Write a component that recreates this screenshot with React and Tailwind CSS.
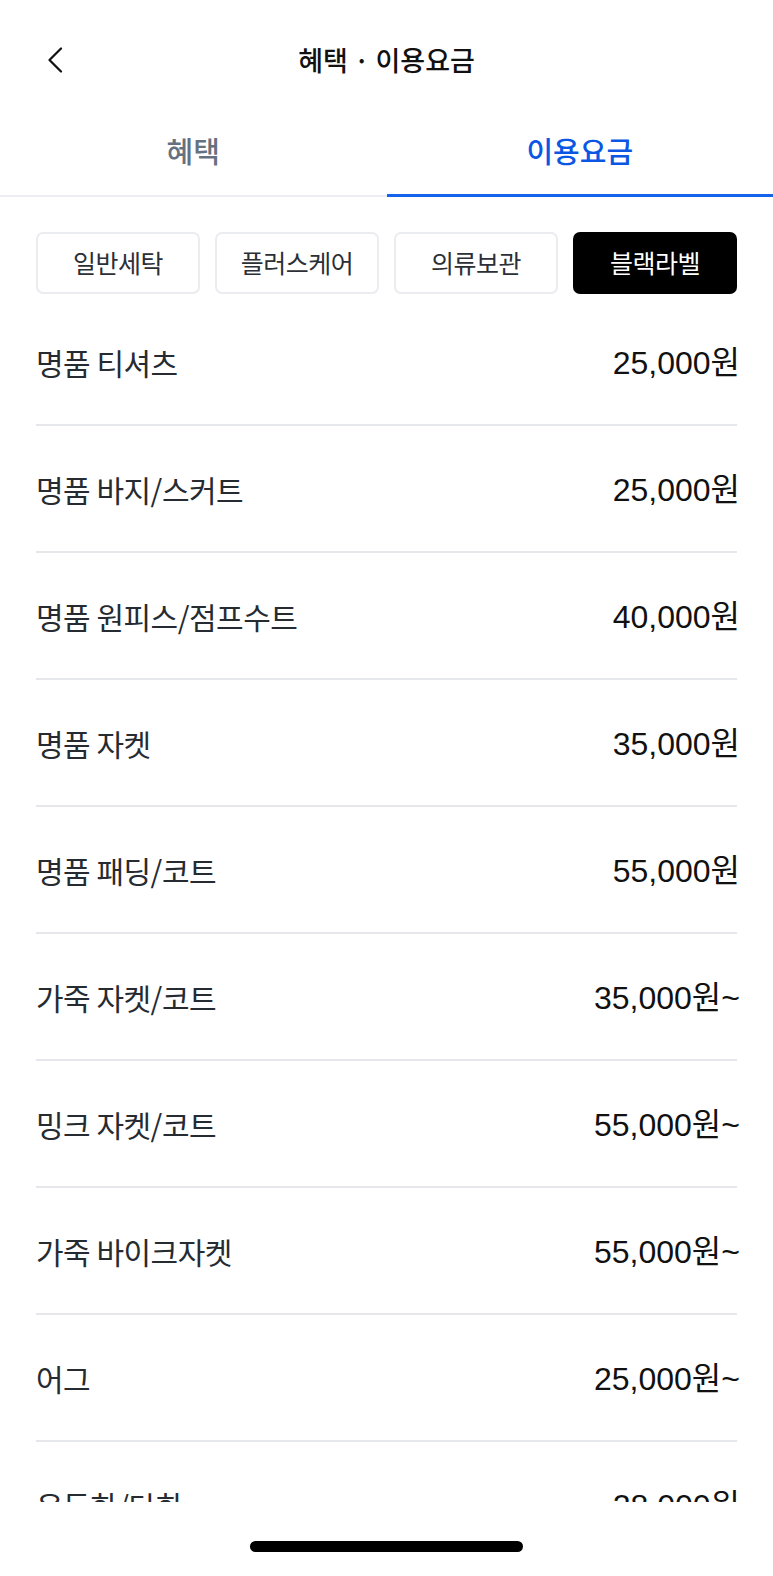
import React, { useState } from "react";

// 블랙라벨 요금표
const prices = [
  { name: "명품 티셔츠", price: "25,000원" },
  { name: "명품 바지/스커트", price: "25,000원" },
  { name: "명품 원피스/점프수트", price: "40,000원" },
  { name: "명품 자켓", price: "35,000원" },
  { name: "명품 패딩/코트", price: "55,000원" },
  { name: "가죽 자켓/코트", price: "35,000원~" },
  { name: "밍크 자켓/코트", price: "55,000원~" },
  { name: "가죽 바이크자켓", price: "55,000원~" },
  { name: "어그", price: "25,000원~" },
  { name: "운동화/단화", price: "28,000원" },
];

const categories = ["일반세탁", "플러스케어", "의류보관", "블랙라벨"];

const BackIcon = () => (
  <svg width="16" height="26" viewBox="0 0 16 26" fill="none">
    <path
      d="M14 1.5L2.5 13L14 24.5"
      stroke="#111"
      strokeWidth="2.2"
      strokeLinecap="round"
      strokeLinejoin="round"
    />
  </svg>
);

const App = () => {
  const [tab, setTab] = useState("fee");
  const [category, setCategory] = useState("블랙라벨");

  return (
    <div className="flex h-[1576px] w-full flex-col overflow-hidden bg-white font-['Noto_Sans_CJK_KR',sans-serif]">
      {/* 헤더 */}
      <header className="relative flex h-[120px] shrink-0 items-center justify-center">
        <button className="absolute left-[47px] top-[47px] flex" aria-label="뒤로">
          <BackIcon />
        </button>
        <h1 className="text-[27px] font-medium text-[#111]">혜택 · 이용요금</h1>
      </header>

      {/* 탭 */}
      <div className="flex h-[77px] shrink-0 border-b-2 border-[#eceef1]">
        <button
          onClick={() => setTab("benefit")}
          className={`flex flex-1 items-center justify-center pb-[14px] text-[29px] font-medium ${
            tab === "benefit" ? "text-[#0b57e3]" : "text-[#66717f]"
          }`}
        >
          혜택
        </button>
        <button
          onClick={() => setTab("fee")}
          className={`-mb-[2px] flex flex-1 items-center justify-center border-b-[3px] pb-[12px] text-[29px] font-medium ${
            tab === "fee" ? "border-[#1463ea] text-[#0b57e3]" : "border-transparent text-[#66717f]"
          }`}
        >
          이용요금
        </button>
      </div>

      {/* 내용 */}
      <div className="flex-1 overflow-hidden px-[36px]">
        <div className="grid grid-cols-4 gap-[15px] pb-[5px] pt-[35px]">
          {categories.map((c) => (
            <button
              key={c}
              onClick={() => setCategory(c)}
              className={`flex h-[62px] items-center justify-center rounded-[7px] text-[25px] tracking-[-0.5px] ${
                category === c
                  ? "bg-black text-white"
                  : "border-2 border-[#eaecef] bg-white text-[#2b2f36]"
              }`}
            >
              {c}
            </button>
          ))}
        </div>

        <ul>
          {prices.map((p) => (
            <li
              key={p.name}
              className="flex h-[127px] items-center justify-between border-b-2 border-[#e6e7ea] pt-[2px]"
            >
              <span className="text-[30px] tracking-[-0.5px] text-[#262b32]">{p.name}</span>
              <span className="-mr-[3px] font-['Liberation_Sans','Noto_Sans_CJK_KR',sans-serif] text-[32px] text-[#111]">
                {p.price}
              </span>
            </li>
          ))}
        </ul>
      </div>

      {/* 홈 인디케이터 */}
      <div className="flex h-[74px] shrink-0 items-start justify-center bg-white pt-[39px]">
        <div className="h-[11px] w-[273px] rounded-full bg-black" />
      </div>
    </div>
  );
};

export default App;
